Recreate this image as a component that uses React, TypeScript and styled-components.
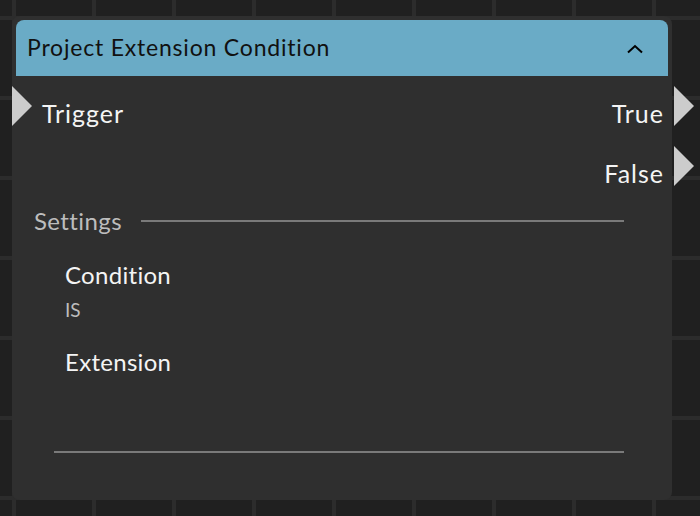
import React from "react";
import styled, { createGlobalStyle } from "styled-components";

const GlobalStyle = createGlobalStyle`
  html, body {
    margin: 0;
    padding: 0;
  }
  body {
    width: 700px;
    height: 516px;
    overflow: hidden;
    font-family: "Lato", "Noto Sans", sans-serif;
    background-color: #202020;
    background-image:
      linear-gradient(to right, #2c2c2c 4px, transparent 4px),
      linear-gradient(to bottom, #2c2c2c 4px, transparent 4px);
    background-size: 80px 80px;
    background-position: 12px 16px;
  }
`;

type Port = { label: string };

const outputs: Port[] = [{ label: "True" }, { label: "False" }];

const fields = [
  { label: "Condition", value: "IS" },
  { label: "Extension", value: "" },
];

const App: React.FC = () => {
  return (
    <>
      <GlobalStyle />
      <Canvas>
        <Node>
          <Header>
            <Title>Project Extension Condition</Title>
            <Chevron width="16" height="10" viewBox="0 0 16 10">
              <polyline points="1,8.5 8,2 15,8.5" fill="none" stroke="#000" strokeWidth="2" />
            </Chevron>
          </Header>

          <Ports>
            <InputColumn>
              <PortRow>
                <PortArrow />
                <PortLabel>Trigger</PortLabel>
              </PortRow>
            </InputColumn>
            <OutputColumn>
              {outputs.map((p) => (
                <PortRow key={p.label} $out>
                  <PortLabel>{p.label}</PortLabel>
                  <PortArrow />
                </PortRow>
              ))}
            </OutputColumn>
          </Ports>

          <Settings>
            <SectionHeader>
              <SectionTitle>Settings</SectionTitle>
              <Rule />
            </SectionHeader>
            <Fields>
              {fields.map((f) => (
                <Field key={f.label}>
                  <FieldLabel>{f.label}</FieldLabel>
                  <FieldValue>{f.value}</FieldValue>
                </Field>
              ))}
            </Fields>
          </Settings>

          <Divider />
        </Node>
      </Canvas>
    </>
  );
};

export default App;

const Canvas = styled.div`
  padding: 16px 0 0 12px;
`;

const Node = styled.div`
  width: 660px;
  height: 484px;
  box-sizing: border-box;
  padding: 4px;
  background: #2f2f2f;
  border-radius: 8px;
  display: flex;
  flex-direction: column;
`;

const Header = styled.div`
  height: 56px;
  flex-shrink: 0;
  background: #6aabc6;
  border-radius: 8px 8px 0 0;
  padding: 0 25px 0 11px;
  display: flex;
  align-items: center;
  justify-content: space-between;
`;

const Title = styled.div`
  font-size: 23px;
  letter-spacing: 0.8px;
  color: #111;
  line-height: 28px;
  padding-bottom: 3px;
`;

const Chevron = styled.svg`
  display: block;
  margin-top: 2px;
`;

const Ports = styled.div`
  display: flex;
  justify-content: space-between;
  padding-top: 10px;
`;

const InputColumn = styled.div`
  display: flex;
  flex-direction: column;
  margin-left: -4px;
`;

const OutputColumn = styled.div`
  display: flex;
  flex-direction: column;
  gap: 20px;
  margin-right: -26px;
`;

const PortRow = styled.div<{ $out?: boolean }>`
  height: 40px;
  display: flex;
  align-items: center;
  justify-content: ${(p) => (p.$out ? "flex-end" : "flex-start")};
  gap: 10px;
`;

const PortArrow = styled.span`
  width: 0;
  height: 0;
  border-top: 20px solid transparent;
  border-bottom: 20px solid transparent;
  border-left: 20px solid #cccccc;
`;

const PortLabel = styled.span`
  font-size: 25px;
  letter-spacing: 1px;
  line-height: 28px;
  padding-top: 13px;
  color: #f4f4f4;
`;

const Settings = styled.div`
  margin: 22px 44px 0 18px;
`;

const SectionHeader = styled.div`
  display: flex;
  align-items: center;
  gap: 19px;
  height: 26px;
`;

const SectionTitle = styled.span`
  font-size: 24px;
  letter-spacing: 0.4px;
  line-height: 26px;
  color: #bdbdbd;
`;

const Rule = styled.div`
  flex: 1;
  height: 2px;
  background: #7a7a7a;
`;

const Fields = styled.div`
  padding: 28px 0 0 31px;
  display: flex;
  flex-direction: column;
  gap: 28px;
`;

const Field = styled.div`
  display: flex;
  flex-direction: column;
  gap: 11px;
`;

const FieldLabel = styled.div`
  font-size: 24px;
  letter-spacing: 0.3px;
  line-height: 26px;
  color: #f4f4f4;
`;

const FieldValue = styled.div`
  font-size: 19px;
  line-height: 22px;
  min-height: 22px;
  color: #bdbdbd;
`;

const Divider = styled.div`
  height: 2px;
  background: #7a7a7a;
  margin: 43px 44px 0 38px;
`;
